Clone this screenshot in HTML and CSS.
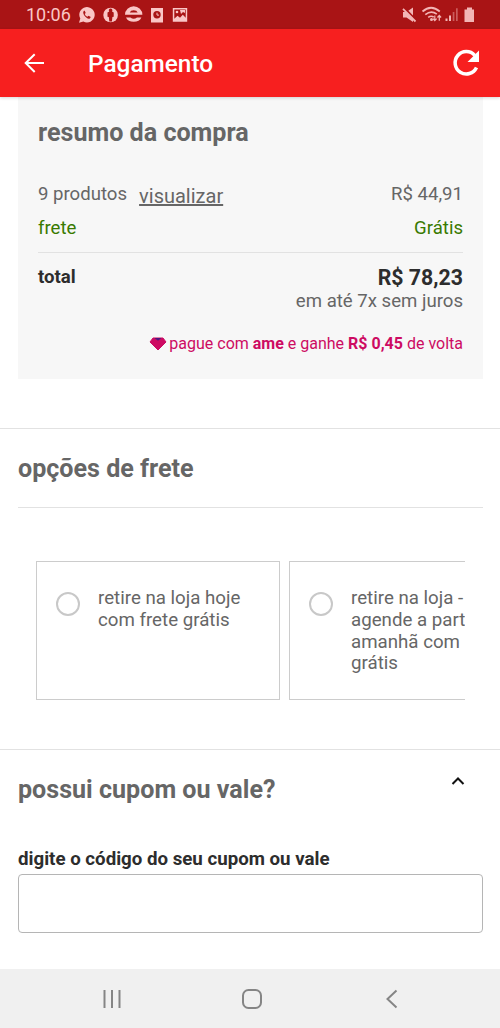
FILE: index.html
```html
<!DOCTYPE html>
<html lang="pt-BR">
<head>
<meta charset="utf-8">
<title>Pagamento</title>
<link rel="stylesheet" href="styles.css">
</head>
<body>
<div class="screen">
  <header class="status">
    <span class="clock">10:06</span>
    <svg class="status-left" width="112" height="20" viewBox="78 5 112 20" fill="#fac6c6">
      <path d="M79 22.800l1.300-4.200A7.700 7.700 0 1 1 83.400 21.600Z"/>
      <path d="M84 10.800c-1.300 1-.9 3 .5 4.900s3.800 3.600 5.300 2.700l1-1.300-2.300-1.300-1.100 1c-1.200-.5-2.300-1.600-2.700-2.800l1-1-1-2.200Z" fill="#a91415"/>
      <circle cx="110.600" cy="15" r="7.300"/>
      <path d="M110.600 8.600a1.800 1.800 0 0 1 1.400 2.900l1.700 1v4.200l-1.300.4-.5 4.500h-2.600l-.5-4.500-1.300-.4v-4.200l1.700-1a1.800 1.800 0 0 1 1.400-2.900Z" fill="#a91415"/>
      <path fill-rule="evenodd" d="M125 14.800a8.700 8.600 0 0 1 17.400 0ZM129.700 12.400h8a4.200 3 0 0 0-8 0Z"/>
      <path d="M126 17.400h4.400q3.300 2.600 6.600 0h4.400a8.200 6.600 0 0 1-15.400 0Z"/>
      <rect x="151" y="8" width="12" height="14.500"/>
      <circle cx="157" cy="14.800" r="3.700" fill="#a91415"/>
      <path d="M157 12.700v2.400h2" fill="none" stroke="#fac6c6"/>
      <path fill-rule="evenodd" d="M172.800 8h14.400v13.800h-14.400ZM174.300 9.500v9.300l3.200-3 2.500 2 2.800-3 2.900 3V9.500Z"/>
      <circle cx="177" cy="12" r="1.300"/><path d="M180 10h5v3l-2-1-2 2Z"/>
    </svg>
    <svg class="status-right" width="76" height="20" viewBox="401 5 76 20" fill="#f3b5b5">
      <path d="M403 12h3.500l6.500-4.500v14.500l-6.500-4.500H403Z"/>
      <path d="M404.500 8.300l12 12.200" stroke="#a91415" stroke-width="2"/>
      <path d="M403 8.800l12.500 12.700" stroke="#f3b5b5" stroke-width="1.800"/>
      <g fill="none" stroke="#f3b5b5" stroke-width="1.700"><path d="M422.500 11.500q8.500-7.500 17.300 0M425.300 14.600q6-4.800 11.500-.4M428.200 17.400q3-2.200 5.500-.2"/></g>
      <circle cx="431.500" cy="19.600" r="1.500"/>
      <path d="M434.800 15.500v5M433 18.700l1.800 2 1.800-2M439.300 20.700v-5M437.500 17.500l1.800-2 1.800 2" fill="none" stroke="#f3b5b5" stroke-width="1.200"/>
      <path d="M445.500 18.500h2v2.500h-2ZM449 15.500h2V21h-2Z"/>
      <path d="M452.700 12h1.700v9h-1.700ZM456 8.300h1.700V21H456Z" opacity=".45"/>
      <path d="M467 7.500h5v2h2v12.500h-9.500v-12.500h2.500Z"/>
    </svg>
  </header>
  <div class="appbar">
    <svg width="22" height="20" viewBox="23 53 22 20" fill="none" stroke="#fff" stroke-width="2"><path d="M44 63H25.500M34.700 54.200L25.700 63l9 9"/></svg>
    <h1 class="appbar-title">Pagamento</h1>
    <svg width="28" height="28" viewBox="452 48.500 28 28"><path d="M474.700 54.800A11.200 11.200 0 1 0 476.500 67" fill="none" stroke="#fff" stroke-width="3.500"/><path d="M479 50v11.500h-11.500Z" fill="#fff"/></svg>
  </div>

  <main class="content">
    <section class="summary">
      <h2 class="heading">resumo da compra</h2>
      <div class="row products"><span class="count">9 produtos</span><a class="view">visualizar</a><span class="value amount">R$ 44,91</span></div>
      <div class="row shipping"><span>frete</span><span class="value">Grátis</span></div>
      <div class="total">
        <strong class="total-label">total</strong>
        <div class="total-values"><strong class="price">R$ 78,23</strong><span class="installments">em até 7x sem juros</span></div>
      </div>
      <div class="cashback">
        <svg width="18" height="14" viewBox="0 0 18 14"><path d="M4 1h10l3 4-8 8-8-8Z" fill="#cd0b62" stroke="#cd0b62" stroke-linejoin="round"/><path d="M5.500 1h7L9 3.800Z" fill="#4c1880"/></svg>
        <span>pague com <b>ame</b> e ganhe <b>R$ 0,45</b> de volta</span>
      </div>
    </section>

    <section class="delivery">
      <h2 class="heading delivery-title">opções de frete</h2>
      <div class="options">
        <label class="option"><span class="radio"></span><span>retire na loja hoje<br>com frete grátis</span></label>
        <label class="option"><span class="radio"></span><span>retire na loja -<br>agende a part<br>amanhã com<br>grátis</span></label>
      </div>
    </section>

    <section class="coupon">
      <div class="coupon-head">
        <h2 class="heading">possui cupom ou vale?</h2>
        <svg width="14" height="10" viewBox="0 0 14 10" fill="none" stroke="#111" stroke-width="2"><path d="M1.500 8L7 2.500 12.500 8"/></svg>
      </div>
      <label class="coupon-label" for="code">digite o código do seu cupom ou vale</label>
      <input class="coupon-input" id="code" type="text">
    </section>
  </main>

  <nav class="navbar">
    <svg width="20" height="20" viewBox="0 0 20 20" stroke="#858585" stroke-width="2"><path d="M2.500 1v18M10 1v18M17.500 1v18"/></svg>
    <svg width="20" height="20" viewBox="0 0 20 20" fill="none" stroke="#858585" stroke-width="2"><rect x="1" y="1" width="18" height="18" rx="5.500"/></svg>
    <svg width="20" height="20" viewBox="0 0 20 20" fill="none" stroke="#858585" stroke-width="2"><path d="M14.500 1.500L5.500 10l9 8.500"/></svg>
  </nav>
</div>
</body>
</html>
```
FILE: styles.css
```css
* { box-sizing: border-box; }
body { margin: 0; background: #fff; font-family: Roboto, sans-serif; color: #666; }
h1, h2 { margin: 0; }
svg { display: block; flex: none; }
.screen { width: 500px; height: 1028px; display: flex; flex-direction: column; overflow: hidden; }
.status { height: 29px; flex: none; background: #a91415; display: flex; align-items: center; padding: 1px 23px 0 26px; }
.clock { width: 52px; font-size: 18px; line-height: 22px; color: #fac6c6; }
.status-right { margin-left: auto; }
.appbar { height: 68px; flex: none; background: #f71f1f; display: flex; align-items: center; padding: 0 20px 0 23px; box-shadow: 0 1px 3px rgba(0, 0, 0, .16); z-index: 1; }
.appbar-title { flex: 1; margin-left: 43px; font-size: 24.4px; line-height: 30px; font-weight: 500; color: #fff; padding-top: 1px; }
.content { height: 872px; flex: none; font-size: 18.6px; line-height: 22px; }
.heading { font-size: 25.1px; line-height: 30px; font-weight: 700; color: #666; }

.summary { margin: 0 17px 0 18px; height: 282px; padding: 21px 20px 0; background: #f7f7f7; }
.row { display: flex; }
.value { margin-left: auto; }
.products { margin-top: 35px; }
.view { margin: 2px 0 -2px 12px; font-size: 20px; text-decoration: underline; }
.shipping { margin-top: 12px; color: #397a00; }
.total { display: flex; justify-content: space-between; margin-top: 13px; padding-top: 12px; border-top: 1px solid #e2e2e2; color: #2d2d2d; }
.total-values { display: flex; flex-direction: column; align-items: flex-end; padding-top: 1px; }
.total-label { padding-top: 1px; }
.price { font-size: 21.3px; line-height: 24px; }
.installments { color: #666; }
.cashback { display: flex; justify-content: flex-end; align-items: center; gap: 2px; margin-top: 22px; font-size: 16px; line-height: 20px; color: #cd0b62; }
.cashback svg { margin-bottom: 1px; }

.delivery { margin-top: 49px; border-top: 1px solid #e2e2e2; padding: 25px 17px 49px 18px; }
.delivery-title { padding-bottom: 23px; border-bottom: 1px solid #e2e2e2; box-sizing: content-box; }
.options { display: flex; gap: 9px; margin: 53px 18px 0; overflow: hidden; }
.option { display: flex; flex: none; gap: 18px; width: 244px; height: 139px; padding: 26px 18px 0 19px; border: 1px solid #ccc; font-size: 18.7px; line-height: 21.8px; white-space: nowrap; }
.radio { flex: none; width: 24px; height: 24px; margin-top: 4px; border: 2px solid #c8c8c8; border-radius: 50%; }

.coupon { border-top: 1px solid #e2e2e2; padding: 25px 17px 0 18px; }
.coupon-head { display: flex; justify-content: space-between; padding-right: 18px; }
.coupon-head svg { margin-top: 1px; }
.coupon-label { display: block; margin-top: 43px; font-size: 18.7px; font-weight: 700; color: #2d2d2d; }
.coupon-input { display: block; width: 100%; height: 59px; margin-top: 4px; border: 1px solid #b5b5b5; border-radius: 4px; background: #fff; font: inherit; padding: 0 12px; }

.navbar { height: 59px; flex: none; background: #f0f0f0; display: flex; justify-content: space-between; align-items: center; padding: 1px 98px 0 102px; }
```
